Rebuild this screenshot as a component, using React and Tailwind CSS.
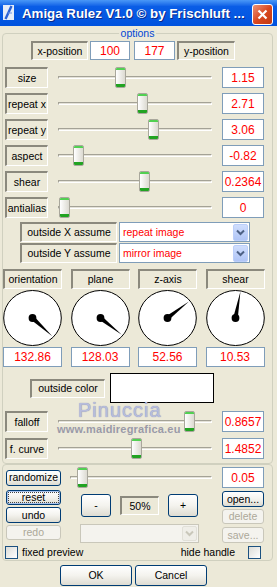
import React from "react";

const sliderRows = [
  { label: "size", value: "1.15", left: 57 },
  { label: "repeat x", value: "2.71", left: 79 },
  { label: "repeat y", value: "3.06", left: 90 },
  { label: "aspect", value: "-0.82", left: 15 },
  { label: "shear", value: "0.2364", left: 81 },
  { label: "antialias", value: "0", left: 1 },
];

const dials = [
  { label: "orientation", value: "132.86", angle: 132.86 },
  { label: "plane", value: "128.03", angle: 128.03 },
  { label: "z-axis", value: "52.56", angle: 52.56 },
  { label: "shear", value: "10.53", angle: 10.53 },
];

function LabelBox({ children, className = "" }) {
  return (
    <div
      className={`flex items-center justify-center whitespace-nowrap border-t-2 border-l-2 border-r border-b border-t-[#8b897d] border-l-[#8b897d] border-r-white border-b-white text-[10.5px] leading-none text-black ${className}`}
    >
      {children}
    </div>
  );
}

function ValueBox({ children, className = "" }) {
  return (
    <div
      className={`flex items-center justify-center border border-[#7f9db9] bg-white text-[12px] leading-none text-[#ff0000] ${className}`}
    >
      {children}
    </div>
  );
}

function Thumb({ left }) {
  return (
    <div
      className="absolute top-0 flex h-[21px] w-[11px] flex-col justify-between overflow-hidden rounded-[2px] border border-[#a9a79c] bg-linear-to-r from-white to-[#dcdad1]"
      style={{ left }}
    >
      <div className="h-[2px] bg-[#52d052]" />
      <div className="h-[3px] bg-[#22a322]" />
    </div>
  );
}

function Slider({ left, className = "" }) {
  return (
    <div className={`relative flex h-[21px] items-center ${className}`}>
      <div className="h-[3px] w-full border-t border-l border-b border-r border-t-[#a4a296] border-l-[#a4a296] border-b-white border-r-white bg-[#e4e2d8]" />
      <Thumb left={left} />
    </div>
  );
}

function SliderRow({ label, value, left }) {
  return (
    <div className="flex h-[21px] items-center">
      <LabelBox className="ml-[2px] h-[21px] w-[43px]">{label}</LabelBox>
      <Slider className="ml-[10px] w-[154px]" left={left} />
      <ValueBox className="ml-[10px] h-[21px] w-[42px]">{value}</ValueBox>
    </div>
  );
}

function Chevron({ color }) {
  return (
    <svg width="9" height="7" viewBox="0 0 9 7">
      <path d="M1 1.5 L4.5 5 L8 1.5" fill="none" stroke={color} strokeWidth="2" />
    </svg>
  );
}

function Select({ children, className = "" }) {
  return (
    <div className={`flex items-center border border-[#7f9db9] bg-white ${className}`}>
      <div className="flex-1 pl-[3px] text-[10.5px] leading-none text-[#ff0000]">{children}</div>
      <div className="mr-[1px] flex h-[17px] w-[15px] items-center justify-center rounded-[2px] border border-[#bccffa] bg-linear-to-b from-[#d0defd] to-[#b0c5f6]">
        <Chevron color="#4d6185" />
      </div>
    </div>
  );
}

function Dial({ angle }) {
  const cx = 29.5;
  const cy = 29;
  const len = 27;
  const a = (angle * Math.PI) / 180;
  const tx = cx + len * Math.sin(a);
  const ty = cy - len * Math.cos(a);
  const w = 2.3;
  const px = Math.cos(a) * w;
  const py = Math.sin(a) * w;
  const pts = `${cx + px},${cy + py} ${tx},${ty} ${cx - px},${cy - py}`;
  return (
    <svg width="59" height="58" viewBox="0 0 59 58" className="block">
      <ellipse cx={cx} cy={cy} rx="28.8" ry="27.5" fill="white" stroke="black" strokeWidth="1" />
      <polygon points={pts} fill="black" />
      <circle cx={cx} cy={cy} r="3.9" fill="black" />
    </svg>
  );
}

function XPButton({ children, className = "", disabled = false, focused = false }) {
  const base = disabled
    ? "border-[#c9c7ba] bg-[#f4f3ee] text-[#aca899]"
    : "border-[#003c74] bg-linear-to-b from-white via-[#f4f3ee] to-[#dedcd2] text-black";
  return (
    <div
      className={`flex items-center justify-center rounded-[3px] border text-[10.5px] leading-none ${base} ${
        focused ? "p-[1px] shadow-[inset_0_0_0_1px_#a9c3ee]" : ""
      } ${className}`}
    >
      {focused ? (
        <div className="flex h-full w-full items-center justify-center border border-dotted border-[#444]">
          {children}
        </div>
      ) : (
        children
      )}
    </div>
  );
}

function Checkbox({ className = "" }) {
  return (
    <div
      className={`h-[13px] w-[13px] border border-[#1c5180] bg-linear-to-br from-[#dcdcd7] to-white ${className}`}
    />
  );
}

export default function App() {
  return (
    <div className="relative flex h-[587px] w-[277px] flex-col overflow-hidden bg-[#ece9d8] font-['Liberation_Sans',Arial,sans-serif] text-black">
      {/* Title bar */}
      <div className="flex h-[26px] shrink-0 items-start bg-linear-to-b from-[#4a98f7] via-[#0a5de6] via-25% to-[#0052de]">
        <svg className="ml-[3px] mt-[5px] shrink-0" width="11" height="15" viewBox="0 0 11 15">
          <rect x="0" y="0" width="11" height="15" fill="#e6edf9" />
          <path d="M2.5 14 L8.5 1" stroke="#2a62d6" strokeWidth="2.4" />
          <path d="M5 8 L9 8" stroke="#6f95e4" strokeWidth="1" />
        </svg>
        <div className="ml-[8px] mt-[6px] whitespace-nowrap text-[13.3px] font-bold leading-[16px] text-white [text-shadow:1px_1px_0_#0b2a8a]">
          Amiga Rulez V1.0 © by Frischluft ...
        </div>
        <div className="ml-auto mr-[4px] mt-[4px] flex h-[21px] w-[21px] shrink-0 items-center justify-center rounded-[3px] border border-white bg-linear-to-br from-[#eb9275] via-[#d9481f] to-[#c23a12]">
          <svg width="11" height="11" viewBox="0 0 11 11">
            <path d="M1.5 1.5 L9.5 9.5 M9.5 1.5 L1.5 9.5" stroke="white" strokeWidth="2.2" />
          </svg>
        </div>
      </div>

      {/* Options group */}
      <div className="relative ml-[2px] mt-[7px] w-[271px] rounded-[4px] border border-[#d0d0bf] pb-[4px]">
        <span className="absolute -top-[7px] left-1/2 -translate-x-1/2 bg-[#ece9d8] px-[2px] text-[10.5px] leading-[12px] text-[#0046d5]">
          options
        </span>

        <div className="ml-[28px] mt-[7px] flex h-[19px]">
          <LabelBox className="w-[57px]">x-position</LabelBox>
          <ValueBox className="ml-[2px] w-[40px]">100</ValueBox>
          <ValueBox className="ml-[4px] w-[41px]">177</ValueBox>
          <LabelBox className="ml-[2px] w-[58px]">y-position</LabelBox>
        </div>

        <div className="mt-[7px] flex flex-col gap-[5px]">
          {sliderRows.map((r) => (
            <SliderRow key={r.label} {...r} />
          ))}
        </div>

        <div className="mt-[4px] flex flex-col gap-[1px]">
          <div className="flex h-[20px]">
            <LabelBox className="ml-[17px] w-[97px]">outside X assume</LabelBox>
            <Select className="ml-[2px] w-[131px]">repeat image</Select>
          </div>
          <div className="flex h-[20px]">
            <LabelBox className="ml-[17px] w-[97px]">outside Y assume</LabelBox>
            <Select className="ml-[2px] w-[131px]">mirror image</Select>
          </div>
        </div>

        <div className="mt-[6px] flex gap-[8.5px]">
          {dials.map((d) => (
            <div key={d.label} className="flex w-[59px] flex-col">
              <LabelBox className="h-[20px] w-full">{d.label}</LabelBox>
              <Dial angle={d.angle} />
              <ValueBox className="h-[20px] w-full">{d.value}</ValueBox>
            </div>
          ))}
        </div>

        <div className="mt-[6px] flex h-[30px] items-center">
          <LabelBox className="ml-[27px] h-[19px] w-[75px]">outside color</LabelBox>
          <div className="ml-[5px] h-[30px] w-[104px] border border-black bg-white" />
        </div>

        <div className="mt-[8px]">
          <SliderRow label="falloff" value="0.8657" left={126} />
        </div>
        <div className="mt-[6px]">
          <SliderRow label="f. curve" value="1.4852" left={73} />
        </div>
      </div>

      {/* Second group */}
      <div className="ml-[2px] w-[271px] rounded-[4px] border border-[#d0d0bf] pb-[1px]">
        <div className="mt-[2px] flex h-[21px] items-center">
          <XPButton className="ml-[3px] h-[16px] w-[55px]">randomize</XPButton>
          <Slider className="ml-[9px] w-[142px]" left={7} />
          <ValueBox className="ml-[10px] h-[21px] w-[42px]">0.05</ValueBox>
        </div>

        <div className="mt-[2px] flex items-start">
          <div className="ml-[3px] flex w-[55px] flex-col">
            <XPButton focused className="h-[15px]">reset</XPButton>
            <XPButton className="mt-[2px] h-[16px]">undo</XPButton>
            <XPButton disabled className="mt-[2px] h-[15px]">redo</XPButton>
          </div>
          <div className="ml-[19px] flex w-[119px] flex-col">
            <div className="mt-[4px] flex items-center">
              <XPButton className="ml-[1px] h-[23px] w-[30px]">-</XPButton>
              <LabelBox className="ml-[9px] h-[19px] w-[39px]">50%</LabelBox>
              <XPButton className="ml-[9px] h-[23px] w-[30px]">+</XPButton>
            </div>
            <div className="mt-[7px] flex h-[19px] w-[119px] items-center justify-end border border-[#c9c7ba] bg-[#f4f3ee]">
              <div className="mr-[1px] flex h-[15px] w-[15px] items-center justify-center rounded-[2px] border border-[#e1e0d8] bg-[#efeee8]">
                <Chevron color="#c9c7ba" />
              </div>
            </div>
          </div>
          <div className="ml-[23px] flex w-[42px] flex-col">
            <XPButton className="mt-[1px] h-[16px]">open...</XPButton>
            <XPButton disabled className="mt-[2px] h-[15px]">delete</XPButton>
            <XPButton disabled className="mt-[3px] h-[16px]">save...</XPButton>
          </div>
        </div>

        <div className="mt-[3px] flex h-[13px] items-center">
          <Checkbox className="ml-[2px]" />
          <span className="ml-[4px] text-[10.5px] leading-none">fixed preview</span>
          <span className="ml-auto text-[10.5px] leading-none">hide handle</span>
          <Checkbox className="ml-[13px] mr-[11px]" />
        </div>
      </div>

      <div className="mt-[4px] flex">
        <XPButton className="ml-[60px] h-[21px] w-[72px]">OK</XPButton>
        <XPButton className="ml-[3px] h-[21px] w-[72px]">Cancel</XPButton>
      </div>

      {/* Watermark */}
      <div className="pointer-events-none absolute left-[78px] top-[400px] text-[20px] leading-none tracking-[1px] text-[#b8bddc] [text-shadow:0_0_1px_#7880b0]">
        Pinuccia
      </div>
      <div className="pointer-events-none absolute left-[57px] top-[424px] text-[11px] font-semibold leading-none tracking-[0.2px] text-[#9a9aa8]">
        www.maidiregrafica.eu
      </div>
    </div>
  );
}
